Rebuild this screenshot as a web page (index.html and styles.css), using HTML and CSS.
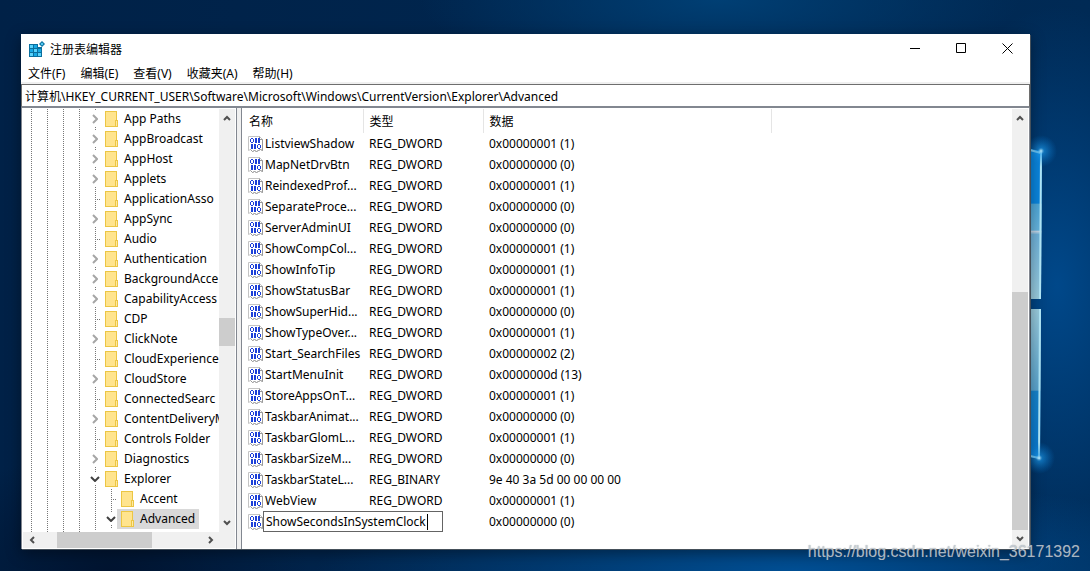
FILE: index.html
```html
<!DOCTYPE html>
<html lang="zh-CN">

<head>
    <meta charset="UTF-8">
    <meta name="viewport" content="width=device-width, initial-scale=1.0">
    <title>注册表编辑器</title>
    <link rel="stylesheet" href="styles.css">
</head>

<body>
    <!-- iconos compartidos -->
    <svg class="sprite" aria-hidden="true">
        <symbol id="folder" viewBox="0 0 13 16">
            <path d="M0 0h12v9h1v7H0z" fill="#ecc644" />
            <path d="M1 1h10v8h-1v6H1z" fill="#ffe48e" />
            <path d="M11 10h1v5h-1z" fill="#ffe9a2" />
        </symbol>
        <symbol id="value" viewBox="0 0 16 16">
            <path d="M.5 .5h11l3 3v11l-2-1-2 1-2 1-2-1-2 1-2-2-2 1z" fill="#fff" stroke="#c4c4c4" />
            <path d="M11.500 .5v3h3M14.500 3.500v11l-2-1-2 1-2 1-2-1-2 1-2-2" fill="none" stroke="#999" />
            <path d="M3 2h2v1H3zM3 6h2v1H3zM2 3h1v3H2zM5 3h1v3H5zM7 2h2v5H7zM10 2h2v5h-2zM3 8h2v5H3zM6 8h2v5H6zM10 8h2v1h-2zM10 12h2v1h-2zM9 9h1v3H9zM12 9h1v3h-1z" fill="#1c3fd8" />
        </symbol>
        <symbol id="up" viewBox="0 0 8 6">
            <path d="M1 5l3-3 3 3" fill="none" stroke="#505050" stroke-width="2" />
        </symbol>
        <symbol id="down" viewBox="0 0 8 6">
            <path d="M1 1l3 3 3-3" fill="none" stroke="#505050" stroke-width="2" />
        </symbol>
        <symbol id="left" viewBox="0 0 6 8">
            <path d="M5 1L2 4l3 3" fill="none" stroke="#505050" stroke-width="2" />
        </symbol>
        <symbol id="right" viewBox="0 0 6 8">
            <path d="M1 1l3 3-3 3" fill="none" stroke="#505050" stroke-width="2" />
        </symbol>
    </svg>

    <div class="wallpaper" aria-hidden="true">
        <svg class="logo" viewBox="0 0 90 360" width="90" height="360">
            <defs>
                <linearGradient id="pane-top" x2="0" y2="1">
                    <stop offset="0" stop-color="#0a84dc" />
                    <stop offset=".36" stop-color="#0a84dc" />
                    <stop offset=".37" stop-color="#4fa8d8" />
                    <stop offset=".54" stop-color="#66b4de" />
                    <stop offset=".55" stop-color="#c0d4e6" />
                    <stop offset=".57" stop-color="#6fb2da" />
                    <stop offset="1" stop-color="#9accde" />
                </linearGradient>
                <linearGradient id="pane-bottom" x2="0" y2="1">
                    <stop offset="0" stop-color="#9accde" />
                    <stop offset=".54" stop-color="#5aa5cf" />
                    <stop offset=".55" stop-color="#1683cc" />
                    <stop offset="1" stop-color="#0878d0" />
                </linearGradient>
                <radialGradient id="glow">
                    <stop offset="0" stop-color="#c8f2ff" />
                    <stop offset=".2" stop-color="#1c9cf0" stop-opacity=".6" />
                    <stop offset="1" stop-color="#0878d0" stop-opacity="0" />
                </radialGradient>
            </defs>
            <path d="M0 48l12 2-1 148H0z" fill="url(#pane-top)" />
            <path d="M0 208h11l-1 150-10-2z" fill="url(#pane-bottom)" />
            <path d="M0 49l11 3-1 146M10 208l-1 149-9-2" fill="none" stroke="#b4eafa" stroke-width="2" />
            <circle cx="11" cy="50" r="16" fill="url(#glow)" />
            <circle cx="9" cy="357" r="16" fill="url(#glow)" />
        </svg>
    </div>

    <main class="window">
        <header class="titlebar">
            <svg class="app-icon" viewBox="0 0 16 16" width="16" height="16">
                <path d="M0 3h9v3h4v10H0z" fill="#0a6f9e" />
                <path d="M1 4h3v3H1zM5 8h3v3H5zM9 12h3v3H9zM1 12h3v3H1z" fill="#5ad2fa" />
                <path d="M5 4h3v3H5zM1 8h3v3H1zM9 8h3v3H9zM5 12h3v3H5z" fill="#16a8e4" />
                <path d="M13 0l3 3-3 3-3-3z" fill="#0a6f9e" />
                <path d="M13 1.500L14.500 3 13 4.500 11.500 3z" fill="#5ad2fa" />
            </svg>
            <h1>注册表编辑器</h1>
            <div class="controls">
                <button aria-label="最小化"><svg viewBox="0 0 11 11" width="11" height="11"><path d="M0 5.500h10" stroke="#000" /></svg></button>
                <button aria-label="最大化"><svg viewBox="0 0 11 11" width="11" height="11"><path d="M.5 .5h9v9h-9z" fill="none" stroke="#000" /></svg></button>
                <button aria-label="关闭"><svg viewBox="0 0 11 11" width="11" height="11"><path d="M.5 .5l10 10M10.500 .5l-10 10" stroke="#000" /></svg></button>
            </div>
        </header>

        <nav class="menu">
            <button>文件(F)</button>
            <button>编辑(E)</button>
            <button>查看(V)</button>
            <button>收藏夹(A)</button>
            <button>帮助(H)</button>
        </nav>

        <input class="address" type="text" aria-label="地址" value="计算机\HKEY_CURRENT_USER\Software\Microsoft\Windows\CurrentVersion\Explorer\Advanced">

        <div class="panes">
            <section class="tree-pane">
                <div class="tree-body">
                    <ul class="tree" id="tree"></ul>
                    <div class="scroll-v tree-scroll">
                        <button aria-label="向上"><svg width="8" height="6"><use href="#up" /></svg></button>
                        <div class="track"><div class="thumb"></div></div>
                        <button aria-label="向下"><svg width="8" height="6"><use href="#down" /></svg></button>
                    </div>
                </div>
                <div class="scroll-h">
                    <button aria-label="向左"><svg width="6" height="8"><use href="#left" /></svg></button>
                    <div class="track"><div class="thumb"></div></div>
                    <button aria-label="向右"><svg width="6" height="8"><use href="#right" /></svg></button>
                </div>
            </section>

            <section class="list-pane">
                <div class="list-body">
                    <table class="values">
                        <colgroup>
                            <col class="col-name">
                            <col class="col-type">
                            <col class="col-data">
                            <col>
                        </colgroup>
                        <thead>
                            <tr>
                                <th>名称</th>
                                <th>类型</th>
                                <th>数据</th>
                                <td></td>
                            </tr>
                        </thead>
                        <tbody id="values"></tbody>
                    </table>
                </div>
                <div class="scroll-v list-scroll">
                    <button aria-label="向上"><svg width="8" height="6"><use href="#up" /></svg></button>
                    <div class="track"><div class="thumb"></div></div>
                    <button aria-label="向下"><svg width="8" height="6"><use href="#down" /></svg></button>
                </div>
            </section>
        </div>
    </main>
    <p class="watermark">https://blog.csdn.net/weixin_36171392</p>

    <script src="script.js"></script>
</body>

</html>
```
FILE: styles.css
```css
html {
    box-sizing: border-box;
    font-family: "Noto Sans", "Noto Sans CJK SC", sans-serif;
    font-size: 12px;
}

*,
*::before,
*::after {
    box-sizing: inherit;
}

body {
    margin: 0;
    min-height: 100vh;
    padding: 34px 60px 22px 21px;
    display: flex;
    flex-direction: column;
    position: relative;
    overflow: hidden;
    color: #000;
    background:
        radial-gradient(ellipse 300px 80px at 66% 0, #003f74, transparent),
        radial-gradient(ellipse 480px 90px at 73% 100%, #004f94, transparent),
        radial-gradient(ellipse 140px 280px at 97% 50%, #00488a, transparent),
        radial-gradient(ellipse 200px 120px at 10% 100%, #001430, transparent),
        linear-gradient(to right, #002147, #002a55);
}

button,
input {
    font: inherit;
    color: inherit;
}

button {
    border: 0;
    padding: 0;
    background: none;
    display: flex;
    align-items: center;
    justify-content: center;
}

svg {
    display: block;
}

.sprite {
    position: absolute;
    width: 0;
    height: 0;
}

.wallpaper {
    position: absolute;
    top: 101px;
    right: -30px;
}

.logo {
    overflow: visible;
}

.window {
    flex-grow: 1;
    display: flex;
    flex-direction: column;
    position: relative;
    background-color: #fff;
    box-shadow: 1px 1px 0 #45505a, 0 4px 14px rgba(0, 0, 0, .4);
}

.titlebar {
    display: flex;
    align-items: center;
    height: 29px;
    padding-left: 8px;
}

.titlebar h1 {
    margin: 0 0 0 5px;
    font-size: 12px;
    font-weight: normal;
}

.controls {
    display: flex;
    margin-left: auto;
}

.controls button {
    width: 46px;
    height: 28px;
}

.menu {
    display: flex;
    gap: 15px;
    height: 21px;
    padding: 0 7px;
    border-bottom: 2px solid #f0f0f0;
}

.address {
    width: 100%;
    height: 24px;
    padding: 0 3px;
    border: 1px solid #6e6e6e;
    border-bottom: 2px solid #828790;
    border-radius: 0;
    outline: 0;
}

.panes {
    flex-grow: 1;
    display: flex;
    background-color: #f0f0f0;
}

.tree-pane {
    width: 216px;
    flex-shrink: 0;
    display: flex;
    flex-direction: column;
    padding: 1px;
    border: 1px solid #828790;
    border-top: 0;
    border-bottom: 0;
    background-color: #fff;
}

.tree-body {
    flex-grow: 1;
    display: flex;
}

/* lineas punteadas de los niveles superiores */
.tree {
    --dots: repeating-linear-gradient(#777 0 1px, transparent 1px 2px);
    flex-grow: 1;
    min-width: 0;
    margin: 0;
    padding: 0 0 0 64px;
    list-style: none;
    overflow: hidden;
    background:
        var(--dots) 8px 0 / 1px 100% no-repeat,
        var(--dots) 24px 0 / 1px 100% no-repeat,
        var(--dots) 40px 0 / 1px 100% no-repeat,
        var(--dots) 56px 0 / 1px 100% no-repeat;
}

.tree ul {
    margin: 0;
    padding: 0 0 2px 16px;
    list-style: none;
    background: var(--dots) 8px 0 / 1px 100% no-repeat;
}

.node {
    display: flex;
    height: 20px;
    background: var(--dots) 8px 0 / 1px 100% no-repeat;
}

.node .branch {
    width: 14px;
    flex-shrink: 0;
    height: 20px;
}

.node span.branch {
    background: repeating-linear-gradient(to right, #777 0 1px, transparent 1px 2px) 8px 10px / 6px 1px no-repeat;
}

.node button.branch {
    padding-left: 2px;
}

.node button.branch svg {
    background-color: #fff;
    padding: 3px 0;
    box-sizing: content-box;
}

.node .label {
    display: flex;
    align-items: center;
    gap: 6px;
    padding: 0 4px;
    line-height: 20px;
    color: inherit;
    text-decoration: none;
    white-space: nowrap;
}

.node .label svg {
    flex-shrink: 0;
}

.node.selected .label {
    background-color: #d9d9d9;
}

.scroll-v,
.scroll-h {
    display: flex;
    flex-shrink: 0;
    background-color: #f0f0f0;
}

.scroll-v {
    width: 16px;
    flex-direction: column;
}

.scroll-v button {
    height: 18px;
}

.scroll-h {
    height: 16px;
    padding-right: 16px;
}

.scroll-h button {
    width: 17px;
}

.track {
    flex-grow: 1;
    display: flex;
}

.scroll-v .track {
    flex-direction: column;
}

.thumb {
    background-color: #cdcdcd;
}

.tree-scroll .thumb {
    height: 28px;
    margin-top: 191px;
}

.scroll-h .thumb {
    width: 95px;
    margin-left: 17px;
}

.list-scroll .track {
    justify-content: flex-end;
}

.list-scroll .thumb {
    height: 59%;
}

.list-pane {
    flex-grow: 1;
    min-width: 0;
    display: flex;
    margin-left: 4px;
    padding: 1px;
    border: 1px solid #828790;
    border-top: 0;
    border-bottom: 0;
    background-color: #fff;
}

.list-body {
    flex-grow: 1;
    min-width: 0;
}

.values {
    width: 100%;
    table-layout: fixed;
    border-collapse: collapse;
}

.col-name,
.col-type {
    width: 120px;
}

.col-data {
    width: 288px;
}

.values th {
    height: 24px;
    padding: 0 6px;
    border-right: 1px solid #e5e5e5;
    font-weight: normal;
    text-align: left;
}

.values tbody td {
    position: relative;
    height: 21px;
    padding: 0 6px;
    line-height: 21px;
    white-space: nowrap;
}

.values tbody td:first-child {
    padding: 0 0 0 5px;
}

.name {
    display: flex;
    align-items: center;
    gap: 1px;
}

.name svg {
    flex-shrink: 0;
}

.rename {
    position: absolute;
    z-index: 1;
    top: 0;
    left: 20px;
    width: 180px;
    height: 21px;
    padding: 0 2px;
    border: 1px solid #646464;
    outline: 0;
    background-color: #fff;
}

.caret {
    position: absolute;
    z-index: 2;
    top: 3px;
    left: 184px;
    width: 1px;
    height: 16px;
    background-color: #000;
}

.watermark {
    position: absolute;
    right: 10px;
    bottom: 9px;
    margin: 0;
    font: 16px/20px "Liberation Sans", sans-serif;
    color: rgba(205, 215, 225, .8);
    text-shadow: 0 0 1px rgba(80, 80, 80, .6);
}
```
FILE: script.js
```javascript
let d = document;

// [nombre, estado]: "+" cerrado, "-" abierto, "" sin hijos
let claves = [
    ["App Paths", "+"],
    ["AppBroadcast", "+"],
    ["AppHost", "+"],
    ["Applets", "+"],
    ["ApplicationAsso", ""],
    ["AppSync", "+"],
    ["Audio", ""],
    ["Authentication", "+"],
    ["BackgroundAcce", "+"],
    ["CapabilityAccess", "+"],
    ["CDP", ""],
    ["ClickNote", "+"],
    ["CloudExperience", ""],
    ["CloudStore", "+"],
    ["ConnectedSearc", ""],
    ["ContentDeliveryM", "+"],
    ["Controls Folder", ""],
    ["Diagnostics", "+"],
    ["Explorer", "-", [
        ["Accent", ""],
        ["Advanced", "-"]
    ]]
];

let valores = [
    ["ListviewShadow", "REG_DWORD", "0x00000001 (1)"],
    ["MapNetDrvBtn", "REG_DWORD", "0x00000000 (0)"],
    ["ReindexedProf...", "REG_DWORD", "0x00000001 (1)"],
    ["SeparateProce...", "REG_DWORD", "0x00000000 (0)"],
    ["ServerAdminUI", "REG_DWORD", "0x00000000 (0)"],
    ["ShowCompCol...", "REG_DWORD", "0x00000001 (1)"],
    ["ShowInfoTip", "REG_DWORD", "0x00000001 (1)"],
    ["ShowStatusBar", "REG_DWORD", "0x00000001 (1)"],
    ["ShowSuperHid...", "REG_DWORD", "0x00000000 (0)"],
    ["ShowTypeOver...", "REG_DWORD", "0x00000001 (1)"],
    ["Start_SearchFiles", "REG_DWORD", "0x00000002 (2)"],
    ["StartMenuInit", "REG_DWORD", "0x0000000d (13)"],
    ["StoreAppsOnT...", "REG_DWORD", "0x00000001 (1)"],
    ["TaskbarAnimat...", "REG_DWORD", "0x00000000 (0)"],
    ["TaskbarGlomL...", "REG_DWORD", "0x00000001 (1)"],
    ["TaskbarSizeM...", "REG_DWORD", "0x00000000 (0)"],
    ["TaskbarStateL...", "REG_BINARY", "9e 40 3a 5d 00 00 00 00"],
    ["WebView", "REG_DWORD", "0x00000001 (1)"],
    ["ShowSecondsInSystemClock", "REG_DWORD", "0x00000000 (0)"]
];

let flecha = (estado) => {
    if (estado === "+") return `<button class="branch" aria-label="展开"><svg viewBox="0 0 6 10" width="6" height="10"><path d="M1 1l4 4-4 4" fill="none" stroke="#a6a6a6" stroke-width="2"/></svg></button>`;
    if (estado === "-") return `<button class="branch" aria-label="折叠"><svg viewBox="0 0 10 6" width="10" height="6"><path d="M1 1l4 4 4-4" fill="none" stroke="#404040" stroke-width="2"/></svg></button>`;
    return `<span class="branch"></span>`;
};

let nodo = ([nombre, estado, hijos]) => `<li>
    <div class="node${nombre === "Advanced" ? " selected" : ""}">
        ${flecha(estado)}
        <a class="label" href="#"><svg width="13" height="16"><use href="#folder"/></svg>${nombre}</a>
    </div>
    ${hijos ? `<ul>${hijos.map(nodo).join("")}</ul>` : ""}
</li>`;

let fila = ([nombre, tipo, dato], i) => {
    let editar = i === valores.length - 1;
    return `<tr>
        <td><div class="name"><svg width="16" height="16"><use href="#value"/></svg>${editar ? "" : `<span>${nombre}</span>`}</div>${editar ? `<input class="rename" type="text" aria-label="名称" value="${nombre}"><i class="caret"></i>` : ""}</td>
        <td>${tipo}</td>
        <td>${dato}</td>
        <td></td>
    </tr>`;
};

d.querySelector("#tree").innerHTML = claves.map(nodo).join("");
d.querySelector("#values").innerHTML = valores.map(fila).join("");
```
